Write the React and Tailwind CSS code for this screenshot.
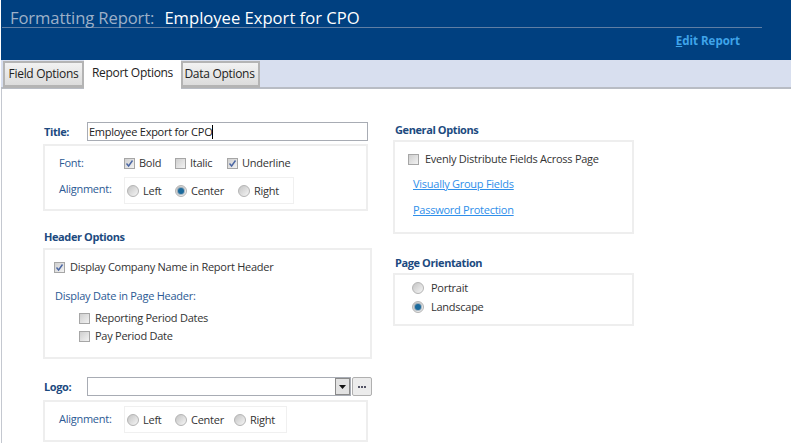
function Check({ on }) {
  return (
    <span className="w-[11px] h-[11px] shrink-0 border border-[#a6a6a6] bg-gradient-to-br from-[#cfcfcf] to-[#f2f2f2] flex items-center justify-center">
      {on && (
        <svg width="9" height="9" viewBox="0 0 9 9" fill="none">
          <path d="M1.5 4.5 L3.6 7 L7.5 1.5" stroke="#4a66a3" strokeWidth="1.4" />
        </svg>
      )}
    </span>
  );
}
function Radio({ on }) {
  return (
    <span className="w-[12px] h-[12px] shrink-0 rounded-full border border-[#b4b4b4] bg-gradient-to-br from-[#c4c4c4] to-[#f6f6f6] flex items-center justify-center">
      {on && <span className="w-[6px] h-[6px] rounded-full bg-[#1b6a9c] ring-1 ring-[#0d4a75]/30" />}
    </span>
  );
}
function Tab({ children, className = "" }) {
  return (
    <div className={"h-[27px] mt-[1px] flex items-center justify-center text-[12px] tracking-[-0.3px] text-[#222] border-2 border-b-[3px] border-[#b4b4b4] bg-gradient-to-b from-[#f2f2f2] to-[#dcdcdc] " + className}>
      {children}
    </div>
  );
}
function Heading({ children, className = "" }) {
  return <div className={"font-bold text-[11px] leading-[14px] tracking-[-0.4px] text-[#1c4a80] " + className}>{children}</div>;
}
function RadioItem({ label, on, className = "" }) {
  return (
    <span className={"flex items-center gap-[4px] " + className}>
      <Radio on={on} />
      <span>{label}</span>
    </span>
  );
}
function CheckItem({ label, on, className = "" }) {
  return (
    <span className={"flex items-center gap-[4px] " + className}>
      <Check on={on} />
      <span>{label}</span>
    </span>
  );
}
const box = "border-2 border-[#eeeeee] bg-white";

export default function App() {
  return (
    <div className="w-[792px] h-[443px] overflow-hidden bg-white px-[1px] text-[11px] leading-[14px] text-[#333] font-['Open_Sans',sans-serif] tracking-[-0.26px]">
      <div className="h-[60px] bg-[#004080] pl-[1px] flex flex-col">
        <div className="w-[760px] h-[28px] pl-[8px] pt-[9px] border-b border-[#5f7ea4] flex items-baseline text-[16.6px] leading-[18px] tracking-normal">
          <span className="text-[#9db0c8] tracking-[-0.1px]">Formatting Report:</span>
          <span className="text-white ml-[10px]">Employee Export for CPO</span>
        </div>
        <div className="w-[738px] mt-[6px] text-right text-[11.5px] font-bold text-[#3fa4ea] tracking-normal">
          <span className="underline">E</span>dit Report
        </div>
      </div>

      <div className="h-[29px] bg-[#d8dfef] border-b-2 border-[#b8bcc4] pl-[2px] flex items-start">
        <Tab className="w-[81px]">Field Options</Tab>
        <div className="h-[29px] w-[97px] bg-white flex items-center justify-center text-[12px] tracking-[-0.3px] text-[#222] pb-[3px]">Report Options</div>
        <Tab className="w-[79px] pr-[2px]">Data Options</Tab>
      </div>

      <div className="flex h-[354px] border-l border-[#c4c8d0] pl-[41px] pt-[33px]">
        <div className="w-[329px] shrink-0">
          <div className="w-[325px] h-[19px] flex items-center">
            <Heading className="w-[44px] pl-[1px]">Title:</Heading>
            <div className="w-[281px] h-[19px] border border-[#a8acb4] bg-white flex items-center pl-[1px] text-[#222]">
              Employee Export for CPO<span className="w-px h-[14px] bg-black" />
            </div>
          </div>
          <div className={box + " w-[325px] h-[67px] mt-[3px] pl-[14px] pt-[9px]"}>
            <div className="flex items-center h-[16px] text-[#333]">
              <span className="w-[65px] text-[#2c5a94]">Font:</span>
              <CheckItem on label="Bold" className="w-[51px]" />
              <CheckItem label="Italic" className="w-[52px]" />
              <CheckItem on label="Underline" />
            </div>
            <div className="flex items-center mt-[6px]">
              <span className="w-[65px] text-[#2c5a94] -mt-[4px]">Alignment:</span>
              <div className="border border-[#f0f0f0] w-[170px] h-[27px] flex items-center pl-[2px]">
                <RadioItem label="Left" className="w-[48px]" />
                <RadioItem on label="Center" className="w-[63px]" />
                <RadioItem label="Right" />
              </div>
            </div>
          </div>

          <Heading className="mt-[19px] pl-[1px]">Header Options</Heading>
          <div className={box + " w-[329px] h-[111px] mt-[4px] pl-[9px] pt-[10px]"}>
            <CheckItem on label="Display Company Name in Report Header" className="gap-[5px]" />
            <div className="text-[#2c5a94] mt-[15px] pl-[1px]">Display Date in Page Header:</div>
            <div className="mt-[8px] pl-[25px] flex flex-col gap-[4px]">
              <CheckItem label="Reporting Period Dates" className="gap-[5px]" />
              <CheckItem label="Pay Period Date" className="gap-[5px]" />
            </div>
          </div>

          <div className="w-[329px] h-[19px] mt-[18px] flex items-center">
            <Heading className="w-[44px] pl-[1px]">Logo:</Heading>
            <div className="w-[264px] h-[19px] border border-[#a8acb4] bg-white flex justify-end">
              <div className="w-[15px] h-[17px] border border-[#8a8a8a] bg-[#e2e2e2] flex items-center justify-center">
                <svg width="7" height="4" viewBox="0 0 7 4"><path d="M0 0H7L3.5 4Z" fill="#111" /></svg>
              </div>
            </div>
            <div className="w-[20px] h-[19px] ml-px rounded-[2px] border border-[#b0b0b0] bg-[#ececec] flex items-center justify-center">
              <svg width="8" height="2" viewBox="0 0 8 2" fill="#556"><rect width="2" height="2" /><rect x="3" width="2" height="2" /><rect x="6" width="2" height="2" /></svg>
            </div>
          </div>
          <div className={box + " w-[325px] h-[42px] mt-[4px] pl-[14px] pt-[4px]"}>
            <div className="flex items-center">
              <span className="w-[65px] text-[#2c5a94] -mt-[1px]">Alignment:</span>
              <div className="border border-[#f0f0f0] w-[163px] h-[27px] flex items-center pl-[2px]">
                <RadioItem label="Left" className="w-[48px]" />
                <RadioItem label="Center" className="w-[59px]" />
                <RadioItem label="Right" />
              </div>
            </div>
          </div>
        </div>

        <div className="ml-[21px] w-[241px] shrink-0">
          <Heading className="mt-[1px] pl-[2px]">General Options</Heading>
          <div className={box + " h-[94px] mt-[3px] pl-[13px] pt-[10px]"}>
            <CheckItem label="Evenly Distribute Fields Across Page" className="gap-[6px]" />
            <div className="mt-[11px] pl-[5px] text-[#2f8fea] underline">Visually Group Fields</div>
            <div className="mt-[12px] pl-[5px] text-[#2f8fea] underline">Password Protection</div>
          </div>
          <Heading className="mt-[22px] pl-[2px]">Page Orientation</Heading>
          <div className={box + " h-[53px] mt-[3px] pl-[17px] pt-[6px] flex flex-col gap-[5px]"}>
            <RadioItem label="Portrait" className="gap-[7px]" />
            <RadioItem on label="Landscape" className="gap-[7px]" />
          </div>
        </div>
      </div>
    </div>
  );
}
